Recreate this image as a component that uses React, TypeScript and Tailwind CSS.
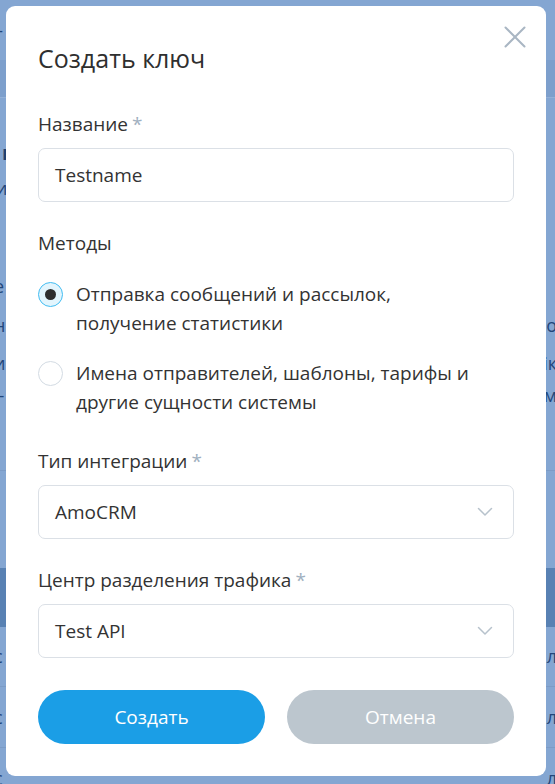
import React from "react";

const font = { fontFamily: "'Open Sans', 'Noto Sans', sans-serif" };

function Chevron() {
  return (
    <svg width="16" height="10" viewBox="0 0 16 10" fill="none">
      <path d="M1.5 1.5 L8 8 L14.5 1.5" stroke="#b7c2cc" strokeWidth="1.5" strokeLinecap="round" strokeLinejoin="round" />
    </svg>
  );
}

function Label({ text, req }: { text: string; req?: boolean }) {
  return (
    <div className="text-[19px] leading-[24px] text-[#333]">
      {text}
      {req && <span className="text-[#9fb0c0] ml-[4px]">*</span>}
    </div>
  );
}

function Select({ value }: { value: string }) {
  return (
    <div className="flex items-center justify-between h-[54px] rounded-[7px] border border-[#dbe0e6] pl-[16px] pr-[20px] mt-[12px]">
      <span className="text-[19px] text-[#333]">{value}</span>
      <Chevron />
    </div>
  );
}

function Radio({ checked, lines }: { checked?: boolean; lines: string[] }) {
  return (
    <div className="flex gap-[13px]">
      <div className="h-[29px] flex items-center shrink-0">
        {checked ? (
          <div className="w-[25px] h-[25px] rounded-full border border-[#43bdf2] bg-[#e3f5fd] flex items-center justify-center">
            <div className="w-[11px] h-[11px] rounded-full bg-[#2e2e2e]" />
          </div>
        ) : (
          <div className="w-[25px] h-[25px] rounded-full border border-[#d3dbe3] bg-white" />
        )}
      </div>
      <div className="text-[19px] leading-[29px] text-[#333] whitespace-nowrap">
        {lines.map((l, i) => (
          <div key={i}>{l}</div>
        ))}
      </div>
    </div>
  );
}

function BgRow({ h, cls, left, right }: { h: string; cls: string; left?: string; right?: string }) {
  return (
    <div className={`${h} ${cls} flex items-center justify-between text-[18px] text-[#23467a]`}>
      <span className="-ml-[6px]">{left}</span>
      <span className="-mr-[2px]">{right}</span>
    </div>
  );
}

export default function App() {
  return (
    <div className="relative w-[555px] h-[784px] overflow-hidden bg-[#84a6d2]" style={font}>
      {/* dimmed page underneath */}
      <div className="flex flex-col">
        <BgRow h="h-[60px]" cls="bg-[#84a6d2]" left="–" />
        <div className="h-[38px] bg-[#7d9fcc] border-b border-[#93b0d7]" />
        <BgRow h="h-[40px]" cls="" left="" />
        <div className="h-[30px] flex items-center text-[20px] font-bold text-[#1f3f70]"><span className="ml-[2px]">ı</span></div>
        <div className="h-[40px] flex items-center text-[18px] text-[#23467a]"><span className="-ml-[4px]">и</span></div>
        <div className="h-[60px]" />
        <BgRow h="h-[36px]" cls="" left="е" />
        <BgRow h="h-[42px]" cls="" left="н" right="о" />
        <BgRow h="h-[34px]" cls="" left="и" right="ік" />
        <BgRow h="h-[30px]" cls="" left="l-" right="м" />
        <div className="h-[60px]" />
        <div className="h-[98px] border-t border-[#7b9bc6]" />
        <div className="h-[59px] bg-[#5881b3]" />
        <BgRow h="h-[60px]" cls="border-b border-[#7b9bc6]" left="с" right="л" />
        <BgRow h="h-[61px]" cls="border-b border-[#7b9bc6]" left="с" right="л" />
        <BgRow h="h-[60px]" cls="" left="с" right="л" />
      </div>

      {/* modal */}
      <div className="absolute inset-0 flex justify-start pl-[6px] pt-[6px]">
        <div className="relative w-[540px] h-[770px] bg-white rounded-[9px] px-[32px] pt-[36px]">
          <button className="absolute right-[20px] top-[20px] w-[22px] h-[22px] flex items-center justify-center">
            <svg width="22" height="22" viewBox="0 0 22 22" fill="none">
              <path d="M1.5 1.5 L20.5 20.5 M20.5 1.5 L1.5 20.5" stroke="#a9b6c3" strokeWidth="2" strokeLinecap="round" />
            </svg>
          </button>
          <h2 className="text-[25px] leading-[32px] text-[#2f2f2f]">Создать ключ</h2>

          <div className="mt-[38px]">
            <Label text="Название" req />
            <div className="flex items-center h-[54px] rounded-[7px] border border-[#dbe0e6] pl-[16px] mt-[12px] text-[19px] text-[#333]">
              Testname
            </div>
          </div>

          <div className="mt-[29px]">
            <Label text="Методы" />
            <div className="flex flex-col gap-[21px] mt-[25px]">
              <Radio checked lines={["Отправка сообщений и рассылок,", "получение статистики"]} />
              <Radio lines={["Имена отправителей, шаблоны, тарифы и", "другие сущности системы"]} />
            </div>
          </div>

          <div className="mt-[32px]">
            <Label text="Тип интеграции" req />
            <Select value="AmoCRM" />
          </div>

          <div className="mt-[29px]">
            <Label text="Центр разделения трафика" req />
            <Select value="Test API" />
          </div>

          <div className="flex gap-[22px] mt-[32px]">
            <button className="flex-1 h-[54px] rounded-full bg-[#1b9ee6] text-white text-[19px] font-medium">
              Создать
            </button>
            <button className="flex-1 h-[54px] rounded-full bg-[#bcc6ce] text-white text-[19px] font-medium">
              Отмена
            </button>
          </div>
        </div>
      </div>
    </div>
  );
}
